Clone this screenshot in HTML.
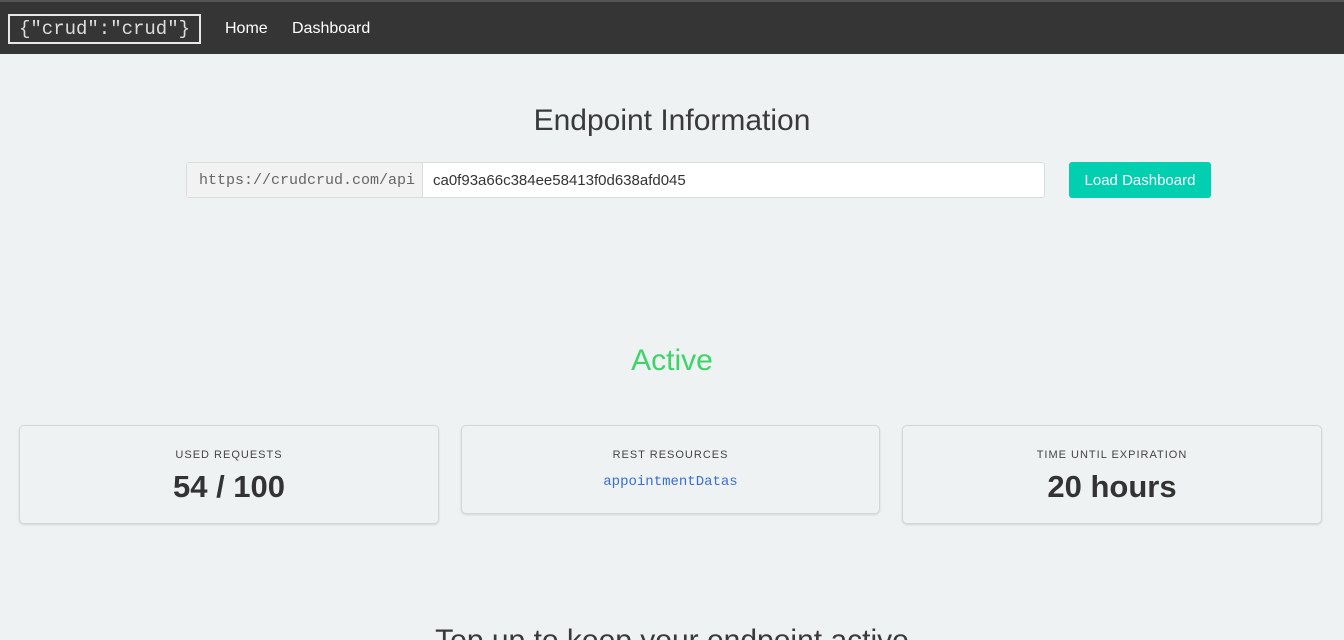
<!DOCTYPE html>
<html><head><meta charset="utf-8"><style>
*{box-sizing:border-box;margin:0;padding:0}
html,body{width:1344px;height:640px;overflow:hidden}
body{background:#eff2f3;font-family:"Liberation Sans",sans-serif;color:#333;position:relative}
.nav{position:absolute;left:0;top:0;width:1344px;height:54px;background:#353535;border-top:2px solid #555}
.logo{position:absolute;left:8px;top:12px;width:193px;height:30px;border:2px solid #e8e8e8;color:#ddd;font-family:"Liberation Mono",monospace;font-size:19px;line-height:26px;text-align:center}
.nl{position:absolute;top:18px;color:#fff;font-size:16px}
h1{position:absolute;left:0;width:1344px;text-align:center;font-weight:normal;font-size:30px;color:#3a3a3a}
.grp{position:absolute;left:186px;top:162px;height:36px;width:859px;border:1px solid #dcdcdc;border-radius:3px;background:#fff;display:flex}
.pre{width:236px;background:#f2f2f2;border-right:1px solid #dcdcdc;font-family:"Liberation Mono",monospace;color:#666;font-size:15px;line-height:36px;padding-left:12px}
.val{padding-left:10px;line-height:36px;font-size:15px;color:#333}
.btn{position:absolute;left:1069px;top:162px;width:142px;height:36px;background:#00cfb0;border-radius:3px;color:#fff;font-size:15px;line-height:37px;text-align:center}
.card{position:absolute;top:425px;height:99px;border:1px solid #d4d6d8;border-radius:5px;background:#eff2f3;box-shadow:0 1px 2px rgba(0,0,0,.12);text-align:center}
.lab{font-size:11px;letter-spacing:1px;color:#444;margin-top:23px}
.big{font-size:31px;font-weight:bold;color:#333;margin-top:8px}
.mono{font-family:"Liberation Mono",monospace;color:#3a6fd0;font-size:14px;margin-top:13px}
</style></head><body>
<div class="nav"><div class="logo">{"crud":"crud"}</div><span class="nl" style="left:225px">Home</span><span class="nl" style="left:292px">Dashboard</span></div>
<h1 style="top:104px">Endpoint Information</h1>
<div class="grp"><div class="pre">https://crudcrud.com/api</div><div class="val">ca0f93a66c384ee58413f0d638afd045</div></div>
<div class="btn">Load Dashboard</div>
<h1 style="top:344px;color:#3ed46a">Active</h1>
<div class="card" style="left:19px;width:420px"><div class="lab">USED REQUESTS</div><div class="big">54 / 100</div></div>
<div class="card" style="left:461px;width:419px;height:89px"><div class="lab">REST RESOURCES</div><div class="mono">appointmentDatas</div></div>
<div class="card" style="left:902px;width:420px"><div class="lab">TIME UNTIL EXPIRATION</div><div class="big">20 hours</div></div>
<h1 style="top:624px">Top up to keep your endpoint active</h1>
</body></html>
